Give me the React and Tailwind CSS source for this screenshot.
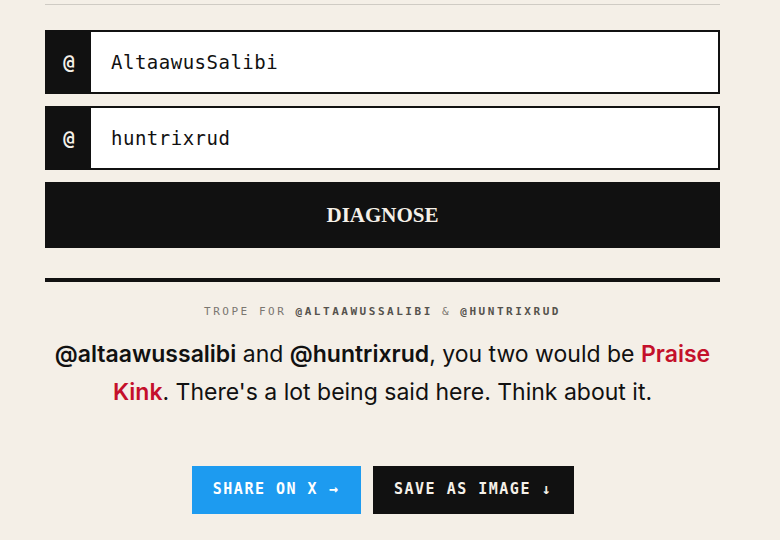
export default function App() {
  const mono = { fontFamily: '"DejaVu Sans Mono", "Liberation Mono", monospace' };
  return (
    <div className="min-h-[540px] w-[780px] bg-[#f4efe7] overflow-hidden">
      <div className="w-[675px] ml-[45px] pt-[4px]">
        <div className="h-px bg-[#cfcbc4]" />
        <div className="mt-[25px] flex flex-col gap-[12px]">
          {["AltaawusSalibi", "huntrixrud"].map((v) => (
            <div key={v} className="flex h-[64px] border-2 border-[#111] bg-white">
              <div className="w-[44px] bg-[#111] text-[#f5f0e8] flex items-center justify-center text-[19px] font-bold" style={mono}>@</div>
              <div className="flex items-center pl-[20px] text-[19px] text-[#111] tracking-[0.5px]" style={mono}>{v}</div>
            </div>
          ))}
          <div className="h-[66px] bg-[#111] flex items-center justify-center pt-[2px] text-[#f5f0e8] text-[21px] font-bold" style={{ fontFamily: '"Liberation Serif", serif' }}>DIAGNOSE</div>
        </div>
        <div className="mt-[30px] h-[4px] bg-[#111]" />
        <div className="mt-[22px] text-center text-[11px] tracking-[0.23em] text-[#7a7670]" style={mono}>
          TROPE FOR <b className="text-[#55524d]">@ALTAAWUSSALIBI</b> &amp; <b className="text-[#55524d]">@HUNTRIXRUD</b>
        </div>
        <p className="mt-[14px] text-center text-[23px] leading-[38px] text-[#111]" style={{ fontFamily: 'Inter, "Noto Sans", sans-serif' }}>
          <b className="font-semibold">@altaawussalibi</b> and <b className="font-semibold">@huntrixrud</b>, you two would be <b className="font-semibold text-[#c4102b]">Praise Kink</b>. There's a lot being said here. Think about it.
        </p>
        <div className="mt-[55px] flex justify-center gap-[12px]">
          <div className="h-[48px] w-[169px] bg-[#1d9bf0] text-white flex items-center justify-center text-[15px] font-bold tracking-[0.1em]" style={mono}>SHARE ON X →</div>
          <div className="h-[48px] w-[201px] bg-[#111] text-[#f5f0e8] flex items-center justify-center text-[15px] font-bold tracking-[0.1em]" style={mono}>SAVE AS IMAGE ↓</div>
        </div>
      </div>
    </div>
  );
}
